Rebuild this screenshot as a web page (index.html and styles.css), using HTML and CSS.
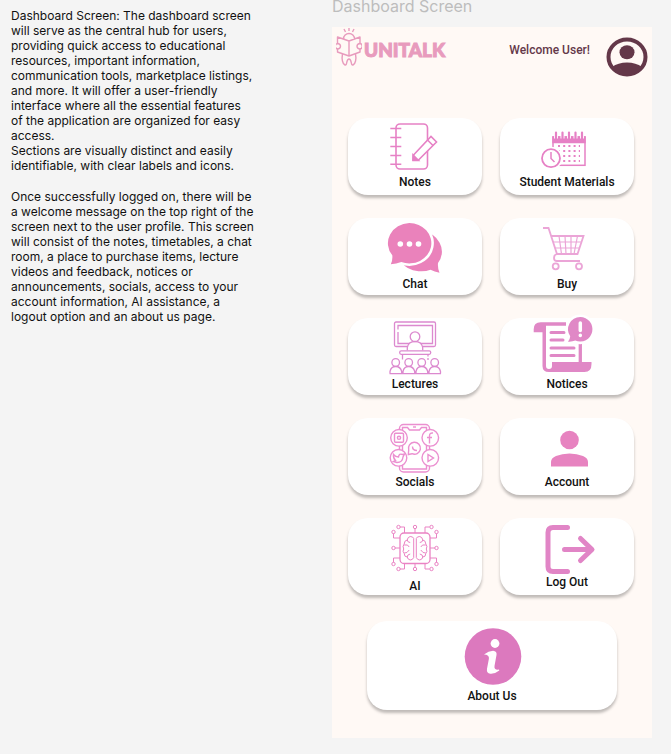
FILE: index.html
```html
<!DOCTYPE html>
<html lang="en">
<head>
<meta charset="utf-8">
<meta name="viewport" content="width=device-width, initial-scale=1">
<title>UniTalk Dashboard</title>
<link rel="stylesheet" href="styles.css">
</head>
<body>
<aside class="notes">
  <p>Dashboard Screen: The dashboard screen will serve as the central hub for users, providing quick access to educational resources, important information, communication tools, marketplace listings, and more. It will offer a user-friendly interface where all the essential features of&nbsp;the application are organized for easy access.</p>
  <p>Sections are visually distinct and easily identifiable, with clear labels and icons.</p>
  <p class="later">Once successfully logged on, there will be a&nbsp;welcome message on the top right of the screen next to the user profile. This screen will consist of the notes, timetables, a chat room, a place to purchase items, lecture videos and feedback, notices or announcements, socials, access to your account information, AI assistance, a logout&nbsp;option and an about us page.</p>
</aside>
<main class="board">
  <h1 class="frame-title">Dashboard Screen</h1>
  <div class="screen">
    <header class="top">
      <a class="brand" href="#">
        <svg class="brand-mark" viewBox="0 0 26 40" aria-hidden="true">
          <path d="M13 1v3M8 2l1.500 3M18 2l-1.500 3M7.500 12a5.500 5.500 0 0 1 11 0M1.500 10l11.500 4 11-4v15l-11 4-11.500-4zM13 14v15"/>
          <path class="skin" d="M2 16.500a2.500 2.500 0 1 0 0 5.500q2.500-.5 2.500-2.700t-2.500-2.800M23.500 16.500a2.500 2.500 0 1 1 0 5.500q-2.500-.5-2.500-2.700t2.500-2.800"/>
          <path d="M6.500 27c-1 5 0 10 2.500 11 2.500.5 1-6 4-6s1.500 6.500 4 6c2.500-1 3.500-6 2.500-11"/>
        </svg>
        <span>UNITALK</span>
      </a>
      <span class="welcome">Welcome User!</span>
      <a class="profile" href="#" aria-label="User profile">
        <svg viewBox="0 0 42 40" aria-hidden="true">
          <ellipse cx="21" cy="20" rx="18.500" ry="17.500" fill="none" stroke="#643849" stroke-width="4"/>
          <ellipse cx="21" cy="15.300" rx="7.500" ry="7" fill="#643849"/>
          <path d="M6 30q6-4.500 15-4.500t15 4.500q-5 8-15 8t-15-8z" fill="#643849"/>
        </svg>
      </a>
    </header>
    <nav class="menu">
      <a class="card" href="#">
        <svg class="icon short" viewBox="0 0 80 55" stroke="#e681c5" stroke-width="1.600" aria-hidden="true">
          <rect x="21" y="5.500" width="31.500" height="45" rx="4"/>
          <path d="M15.300 10h11M15.300 19h11M15.300 28h11M15.300 37h11M15.300 45.700h11"/>
          <path d="M38 41.500l.5-5L56 18l5.500 5.500L43.500 41.500z" fill="#fff"/>
          <path d="M38 42v-5.500l5.500 5.500z" fill="#e681c5"/><path d="M52.500 21.500l5.500 5.500"/>
        </svg>
        <span>Notes</span>
      </a>
      <a class="card" href="#">
        <svg class="icon short" viewBox="0 0 80 55" stroke="#e681c5" stroke-width="1.500" aria-hidden="true">
          <rect x="26" y="18.500" width="32" height="28.300"/>
          <path d="M26 18.500h32V24H26z" fill="#e681c5"/>
          <path d="M29 14v6M35.500 14v6M42 14v6M48.500 14v6M55 14v6" stroke="#fff" stroke-width="4"/>
          <path d="M29 14v6M35.500 14v6M42 14v6M48.500 14v6M55 14v6" stroke-width="2.200" stroke-linecap="round"/>
          <path d="M31 27.500h22M31 32.500h22M31 37.500h22M31 42.500h22" stroke-width="2" stroke-dasharray="2 3.200"/>
          <circle cx="24" cy="39.700" r="11.500" fill="#fff" stroke="none"/>
          <circle cx="24" cy="39.700" r="9" fill="#fff" stroke-width="1.800"/><path d="M24 33.500v6.500l3.500 3.500"/>
        </svg>
        <span>Student Materials</span>
      </a>
      <a class="card" href="#">
        <svg class="icon" viewBox="0 0 80 58" fill="#ea82bb" aria-hidden="true">
          <path fill="#ea82bb" d="M46 14a21 19.600 0 0 1 17 31q-.5 5 1.500 9.700-5-1-9-3-5 2-12 1.500-12-1-17-9.500z"/>
          <path fill="#ea82bb" stroke="#fff" stroke-width="5" paint-order="stroke" d="M34.300 5a22 20.200 0 1 1-8 39q-5 2-10.500 2.300 2-4 1.500-9A22 20.200 0 0 1 34.300 5z"/>
          <g fill="#fff"><circle cx="25.300" cy="26" r="2.800"/><circle cx="34.500" cy="26" r="2.800"/><circle cx="43.500" cy="26" r="2.800"/></g>
        </svg>
        <span>Chat</span>
      </a>
      <a class="card" href="#">
        <svg class="icon" viewBox="0 0 80 58" stroke="#eba5d7" stroke-width="1.800" aria-hidden="true">
          <path d="M16 10h5.500l8.500 26h20.500l6-18H24M30 36c-4 1-4 7 0 7h23"/>
          <path stroke-width="1.200" d="M26 24h29M28 30h25M32 18l2.500 18M38 18l1 18M44 18v18M50.500 18L47 36"/>
          <circle cx="28.700" cy="48.300" r="3"/><circle cx="52" cy="48.300" r="3"/>
        </svg>
        <span>Buy</span>
      </a>
      <a class="card" href="#">
        <svg class="icon" viewBox="0 0 80 58" stroke="#dc89cf" stroke-width="1.300" aria-hidden="true">
          <rect x="19.500" y="4" width="41" height="24.500" rx="1.500"/><path d="M23 14v11.500h34.500V7.500H23v4"/>
          <path d="M32.300 32.500v-3q1-6 7.700-6t7.700 6v3" fill="#fff"/><circle cx="40" cy="18.700" r="4.800" fill="#fff"/>
          <rect x="24.700" y="32.800" width="31" height="3.500" rx="1.500" fill="#fff"/><path d="M27.500 36.500v5M53 36.500v2M53 40v2"/>
          <path d="M15 55.500v-2q1-5 5.700-5t6 5v2M28 55.500v-2q1-5 5.700-5t6 5v2M41 55.500v-2q1-5 5.700-5t6 5v2M54 55.500v-2q1-5 5.700-5t5.800 5v2M14.500 55.700h51.500"/>
          <circle cx="20.700" cy="44.500" r="3.800"/><circle cx="33.700" cy="44.500" r="3.800"/><circle cx="46.700" cy="44.500" r="3.800"/><circle cx="59.700" cy="44.500" r="3.800"/>
        </svg>
        <span>Lectures</span>
      </a>
      <a class="card" href="#">
        <svg class="icon" viewBox="0 0 80 58" aria-hidden="true">
          <path fill="#e088c6" d="M6.700 14.300v-3q0-7 7-7H39v3.400H19V48q0 3 3 3t3-3v-4h39.500v2q0 8-7 8H22q-6.500 0-6.500-6V14.300z"/>
          <path stroke="#e088c6" stroke-width="3.300" d="M53.300 26v19"/>
          <path stroke="#e088c6" stroke-width="3" stroke-linecap="round" d="M24 14.500h13M24 22h12M24 30h23M24 37.500h23"/>
          <path fill="#e088c6" stroke="#fff" stroke-width="5" paint-order="stroke" d="M53.300-1a12.300 12.300 0 1 1-5 23.600Q45 24 41 23.700q2-2.500 2.200-5.500A12.300 12.300 0 0 1 53.300-1z"/>
          <path stroke="#fff" stroke-width="3.500" stroke-linecap="round" d="M53.300 5v7.500M53.300 17.300v.1"/>
        </svg>
        <span>Notices</span>
      </a>
      <a class="card" href="#">
        <svg class="icon short" viewBox="0 0 80 55" stroke="#eb8fd0" stroke-width="1.400" aria-hidden="true">
          <rect x="24.500" y="6" width="30" height="47.500" rx="4"/><path d="M27.500 9h5l2 2.500h10L46.500 9h5v41.500h-24z"/><path d="M38 8.500h3"/>
          <g fill="#fff"><circle cx="24" cy="19.300" r="8.300"/><circle cx="55.300" cy="19.300" r="8.300"/><circle cx="23.500" cy="39.300" r="8.300"/><circle cx="55.300" cy="39.300" r="8.300"/>
          <path d="M33.300 36l.4-4.500a6 6 0 1 1 3.300 3.700z"/></g>
          <rect x="19.500" y="14.800" width="9" height="9" rx="1"/><circle cx="24" cy="19.300" r="1.600"/>
          <path d="M58 14.500q-3.500-.5-3.500 3v7.500M52 19h5"/>
          <path d="M18.500 36q2 2.500 5 2.500.5-4 4-2.500l2-.5-1.500 3q-.5 5.500-6 5.500l-3.500-1 2-1q-2.500-2.500-2-6z"/>
          <path d="M53 36v7l5.500-3.500zM37.500 28q0 4 4.500 4"/>
        </svg>
        <span>Socials</span>
      </a>
      <a class="card" href="#">
        <svg class="icon short" viewBox="0 0 80 55" aria-hidden="true">
          <g fill="#e783c0"><circle cx="42.500" cy="21.500" r="9.300"/><path d="M24 48v-4.500q0-4 5-6 6-2.500 13.500-2.500T56 37.500q5 2 5 6V48z"/></g>
        </svg>
        <span>Account</span>
      </a>
      <a class="card" href="#">
        <svg class="icon tall" viewBox="0 0 80 60" stroke="#ea83c4" stroke-width="1" aria-hidden="true">
          <rect x="25" y="15" width="30" height="30.500" rx="4" stroke-width="1.300"/>
          <path d="M25 9h4.500v6M18.500 15.500V20H25M40 10.500V15M54.500 9H50v6M61.500 15.500V20H55M20 30h5M55 30h5M18.500 44.500V40H25M25 51h4.500v-5.500M40 49.500v-4M54.500 51H50v-5.500M61.500 44.500V40H55"/>
          <circle cx="23.500" cy="9" r="1.700"/><circle cx="18.500" cy="14" r="1.700"/><circle cx="40" cy="9" r="1.700"/><circle cx="56.500" cy="9" r="1.700"/><circle cx="61.500" cy="14" r="1.700"/><circle cx="18.500" cy="30" r="1.700"/><circle cx="61.500" cy="30" r="1.700"/><circle cx="18.500" cy="46" r="1.700"/><circle cx="23.500" cy="51" r="1.700"/><circle cx="40" cy="51" r="1.700"/><circle cx="56.500" cy="51" r="1.700"/><circle cx="61.500" cy="46" r="1.700"/>
          <path d="M38.700 20.500v19q-1 2.500-3.500 2.500-2.500-.5-3-3-3 0-3-3.500-2-2-.5-4.500-1.500-3 .5-5 0-3.500 3-4 .5-3 3-3.500 3 0 3.500 2zM41.300 20.500v19q1 2.500 3.500 2.500 2.500-.5 3-3 3 0 3-3.500 2-2 .5-4.500 1.500-3-.5-5 0-3.500-3-4-.5-3-3-3.500-3 0-3.500 2zM32.200 22q.5 2.500 3 2.500M29.200 27q4-1 5 2M29.200 35q3 .5 5-3M32.200 39q0-2.500 3-3M47.800 22q-.5 2.500-3 2.500M50.800 27q-4-1-5 2M50.800 35q-3 .5-5-3M47.800 39q0-2.500-3-3"/>
        </svg>
        <span>AI</span>
      </a>
      <a class="card" href="#">
        <svg class="icon short" viewBox="0 0 80 55" stroke="#e185c6" stroke-width="5" stroke-linecap="round" stroke-linejoin="round" aria-hidden="true">
          <path d="M40.500 9H26q-5 0-5 5v34q0 5 5 5h14.500M37.500 31h27M53.500 20l11.500 11-11.500 11"/>
        </svg>
        <span>Log Out</span>
      </a>
      <a class="card wide" href="#">
        <svg class="icon large" viewBox="0 0 80 67" aria-hidden="true">
          <circle cx="41" cy="35.500" r="28.300" fill="#dc79be"/>
          <path fill="#fff" d="M32 33.500q5-4 10-3.600 3 .4 2.500 4l-2 11q-.6 4.500 4.500 3.700l.3 1q-4 3.400-9 3.100-4-.5-3.300-5l1.900-10q.6-4-4.900-4.200z"/>
          <circle cx="43" cy="22.500" r="4.400" fill="#fff"/>
        </svg>
        <span>About Us</span>
      </a>
    </nav>
  </div>
</main>
</body>
</html>
```
FILE: styles.css
```css
* {
  box-sizing: border-box;
}

body {
  display: flex;
  justify-content: space-between;
  gap: 63px;
  margin: 0;
  padding: 0 19px 16px 11px;
  background: #f4f4f4;
  color: #111;
  font-family: Roboto, sans-serif;
}

a {
  color: inherit;
  text-decoration: none;
}

.notes {
  flex: 1 1 250px;
  max-width: 250px;
  padding-top: 8px;
  font: 12px/15px Inter, sans-serif;
}

.notes p {
  margin: 0;
}

.notes .later {
  margin-top: 16px;
}

.board {
  flex: 0 1 320px;
}

.frame-title {
  margin: 0;
  height: 27px;
  color: #bdbdbd;
  font: 400 16px/13px Inter, sans-serif;
}

.screen {
  padding-bottom: 28px;
  background: #fff9f5;
}

.top {
  display: flex;
  align-items: flex-start;
  height: 91px;
  padding: 0 4px;
}

.brand {
  display: flex;
  gap: 2px;
  color: #e89bbd;
  font: 900 19px/46px Lato, sans-serif;
  -webkit-text-stroke: 1px #e89bbd;
}

.brand-mark {
  width: 26px;
  height: 40px;
  fill: none;
  stroke: #e89bbd;
  stroke-width: 1.4;
  stroke-linejoin: round;
}

.brand-mark .skin {
  fill: #fff9f5;
}

.welcome {
  margin-left: auto;
  color: #643849;
  font-size: 12px;
  font-weight: 500;
  line-height: 46px;
}

.profile {
  margin: 10px 0 0 16px;
}

.profile svg {
  display: block;
  width: 42px;
  height: 40px;
}

.menu {
  display: grid;
  grid-template-columns: 1fr 1fr;
  gap: 23px 18px;
  padding: 0 18px 0 16px;
}

.card {
  display: flex;
  flex-direction: column;
  align-items: center;
  height: 77px;
  border-radius: 20px;
  background: #fff;
  box-shadow: 0 3px 3px rgba(0, 0, 0, 0.25);
  font-size: 12px;
  font-weight: 500;
  line-height: 16px;
}

.icon {
  flex: none;
  width: 80px;
  height: 58px;
  fill: none;
  overflow: visible;
}

.icon.short {
  height: 56px;
}

.icon.tall {
  height: 60px;
}

.icon.large {
  height: 67px;
}

.card.wide {
  grid-column: 1 / -1;
  height: 89px;
  margin: 3px 17px 0 19px;
}
```
